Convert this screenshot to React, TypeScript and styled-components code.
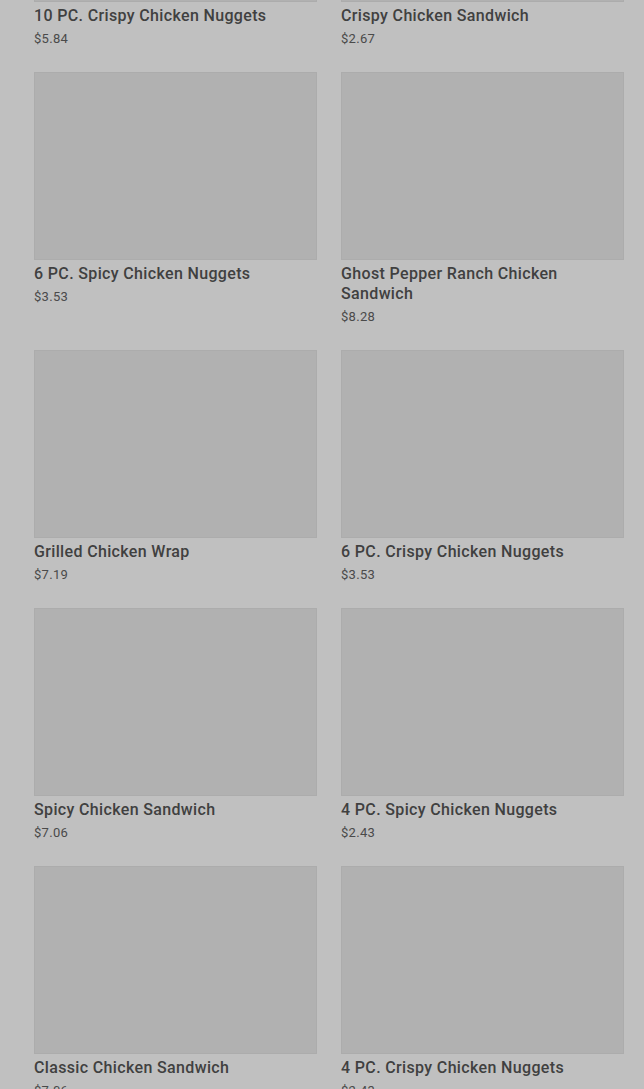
import React, {useLayoutEffect, useRef} from 'react';
import styled, {createGlobalStyle} from 'styled-components';

const GlobalStyle = createGlobalStyle`
  html, body {
    margin: 0;
    padding: 0;
    background: #c0c0c0;
    font-family: Roboto, "Noto Sans", sans-serif;
  }
`;

const Viewport = styled.div`
  height: 100vh;
  overflow: hidden;
  background: #c0c0c0;
`;

const Grid = styled.div`
  display: grid;
  grid-template-columns: repeat(2, 283px);
  column-gap: 24px;
  row-gap: 23px;
  padding: 0 20px 40px 34px;
  align-items: start;
`;

const Card = styled.div`
  display: flex;
  flex-direction: column;
`;

const Thumb = styled.div`
  height: 188px;
  background: #b1b1b1;
  box-shadow: inset 0 0 0 1px rgba(0, 0, 0, 0.025);
`;

const Name = styled.div`
  margin-top: 4px;
  font-size: 16px;
  line-height: 20px;
  font-weight: 500;
  color: #404040;
  letter-spacing: 0.35px;
`;

const Price = styled.div`
  margin-top: 3px;
  font-size: 13px;
  line-height: 20px;
  color: #4a4a4a;
  letter-spacing: 0.3px;
`;

const items = [
  {name: '10 PC. Crispy Chicken Nuggets', price: '$5.84'},
  {name: 'Crispy Chicken Sandwich', price: '$2.67'},
  {name: '6 PC. Spicy Chicken Nuggets', price: '$3.53'},
  {name: 'Ghost Pepper Ranch Chicken Sandwich', price: '$8.28'},
  {name: 'Grilled Chicken Wrap', price: '$7.19'},
  {name: '6 PC. Crispy Chicken Nuggets', price: '$3.53'},
  {name: 'Spicy Chicken Sandwich', price: '$7.06'},
  {name: '4 PC. Spicy Chicken Nuggets', price: '$2.43'},
  {name: 'Classic Chicken Sandwich', price: '$7.06'},
  {name: '4 PC. Crispy Chicken Nuggets', price: '$2.43'},
];

export default function App() {
  const ref = useRef<HTMLDivElement>(null);

  // the reference is scrolled so only the bottom of the first pictures shows
  useLayoutEffect(() => {
    if (ref.current) ref.current.scrollTop = 186;
  }, []);

  return (
    <>
      <GlobalStyle />
      <Viewport ref={ref}>
        <Grid>
          {items.map((item, i) => (
            <Card key={i}>
              <Thumb />
              <Name>{item.name}</Name>
              <Price>{item.price}</Price>
            </Card>
          ))}
        </Grid>
      </Viewport>
    </>
  );
}
